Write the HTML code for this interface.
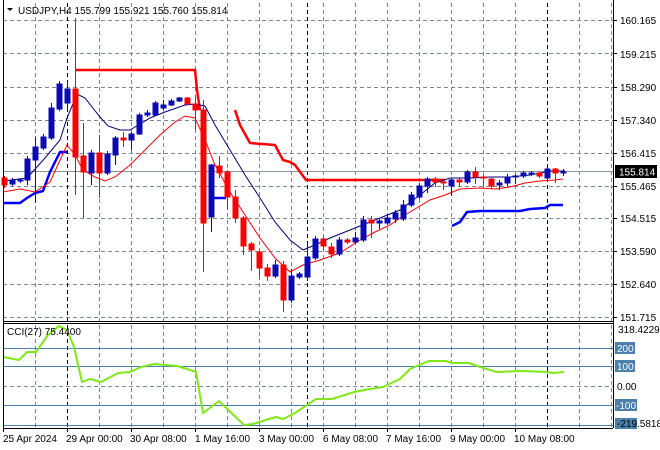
<!DOCTYPE html>
<html><head><meta charset="utf-8"><style>
html,body{margin:0;padding:0;background:#fff;width:660px;height:450px;overflow:hidden}
svg text{font-family:"Liberation Sans",sans-serif;font-size:10px;fill:#000}
</style></head><body>
<svg width="660" height="450" xmlns="http://www.w3.org/2000/svg">
<rect width="660" height="450" fill="#fff"/>
<g stroke="#7b8894" stroke-dasharray="4,3" stroke-width="1">
<line x1="3" y1="20.5" x2="613" y2="20.5"/><line x1="3" y1="53.5" x2="613" y2="53.5"/><line x1="3" y1="87.5" x2="613" y2="87.5"/><line x1="3" y1="120.5" x2="613" y2="120.5"/><line x1="3" y1="153.5" x2="613" y2="153.5"/><line x1="3" y1="186.5" x2="613" y2="186.5"/><line x1="3" y1="218.5" x2="613" y2="218.5"/><line x1="3" y1="251.5" x2="613" y2="251.5"/><line x1="3" y1="284.5" x2="613" y2="284.5"/><line x1="3" y1="317.5" x2="613" y2="317.5"/>
<line x1="35.5" y1="3" x2="35.5" y2="428"/><line x1="99.5" y1="3" x2="99.5" y2="428"/><line x1="131.5" y1="3" x2="131.5" y2="428"/><line x1="163.5" y1="3" x2="163.5" y2="428"/><line x1="195.5" y1="3" x2="195.5" y2="428"/><line x1="227.5" y1="3" x2="227.5" y2="428"/><line x1="259.5" y1="3" x2="259.5" y2="428"/><line x1="291.5" y1="3" x2="291.5" y2="428"/><line x1="323.5" y1="3" x2="323.5" y2="428"/><line x1="355.5" y1="3" x2="355.5" y2="428"/><line x1="387.5" y1="3" x2="387.5" y2="428"/><line x1="419.5" y1="3" x2="419.5" y2="428"/><line x1="451.5" y1="3" x2="451.5" y2="428"/><line x1="483.5" y1="3" x2="483.5" y2="428"/><line x1="515.5" y1="3" x2="515.5" y2="428"/><line x1="579.5" y1="3" x2="579.5" y2="428"/><line x1="611.5" y1="3" x2="611.5" y2="428"/>
<line x1="3" y1="386.5" x2="613" y2="386.5"/>
</g>
<g stroke="#000" stroke-dasharray="4,3"><line x1="67.5" y1="3" x2="67.5" y2="428"/><line x1="307.5" y1="3" x2="307.5" y2="428"/><line x1="547.5" y1="3" x2="547.5" y2="428"/></g>
<line x1="3" y1="171.5" x2="613" y2="171.5" stroke="#8a949c"/>
<g fill="none" stroke-width="2.5" stroke-linejoin="round">
<polyline stroke="#ff0000" points="75,70 195,70 197,90 200,110"/>
<polyline stroke="#ff0000" points="235,110 240,125 250,143 275,145 283,160 290,162 295,165 306,180 445,180"/>
<polyline stroke="#0000ff" points="3,203 20,203 27,198 35,193 43,191 50,172 60,152 67,152"/>
<polyline stroke="#0000ff" points="211,198 226,198"/>
<polyline stroke="#0000ff" points="452,226 460,222 467,212 480,211 520,211 530,209 545,208 550,205 563,205"/>
</g>
<polyline fill="none" stroke="#000080" stroke-width="1" points="3,181 27,178 45,158 60,140 67,118 77,94 85,98 100,117 108,126 120,130 130,130 140,124 150,118 165,112 185,105 195,104 205,106 215,125 230,150 245,175 260,198 275,222 290,240 303,250 315,245 330,238 345,232 360,226 380,218 400,210 420,195 435,183 450,178 470,178 490,177 510,177 530,175 550,171 565,171"/>
<polyline fill="none" stroke="#ff0000" stroke-width="1" points="3,192 20,189 35,192 50,182 67,145 75,155 83,170 95,177 105,181 115,177 130,165 145,150 160,135 175,122 185,116 195,118 205,140 215,165 230,192 245,215 260,238 275,258 290,272 303,265 320,260 340,253 360,240 375,232 390,225 400,218 415,209 430,200 445,195 460,189 480,188 495,189 510,187 525,183 540,181 555,180 563,179"/>
<g stroke="#ff0000" fill="#ff0000">
<line x1="4.5" y1="176" x2="4.5" y2="188"/><rect x="2" y="178" width="5" height="7"/>
<line x1="75.5" y1="18" x2="75.5" y2="195"/><rect x="73" y="89" width="5" height="68"/>
<line x1="83.5" y1="123" x2="83.5" y2="218"/><rect x="81" y="156" width="5" height="16"/>
<line x1="99.5" y1="135" x2="99.5" y2="198"/><rect x="97" y="153" width="5" height="20"/>
<line x1="123.5" y1="132" x2="123.5" y2="147"/><rect x="121" y="138" width="5" height="2"/>
<line x1="187.5" y1="97" x2="187.5" y2="105"/><rect x="185" y="98" width="5" height="6"/>
<line x1="195.5" y1="96" x2="195.5" y2="130"/><rect x="193" y="104" width="5" height="6"/>
<line x1="203.5" y1="100" x2="203.5" y2="272"/><rect x="201" y="110" width="5" height="113"/>
<line x1="219.5" y1="156" x2="219.5" y2="178"/><rect x="217" y="166" width="5" height="7"/>
<line x1="227.5" y1="170" x2="227.5" y2="210"/><rect x="225" y="172" width="5" height="25"/>
<line x1="235.5" y1="190" x2="235.5" y2="223"/><rect x="233" y="197" width="5" height="21"/>
<line x1="243.5" y1="216" x2="243.5" y2="255"/><rect x="241" y="218" width="5" height="28"/>
<line x1="251.5" y1="242" x2="251.5" y2="271"/><rect x="249" y="244" width="5" height="6"/>
<line x1="259.5" y1="250" x2="259.5" y2="277"/><rect x="257" y="252" width="5" height="16"/>
<line x1="267.5" y1="264" x2="267.5" y2="281"/><rect x="265" y="268" width="5" height="8"/>
<line x1="283.5" y1="261" x2="283.5" y2="312"/><rect x="281" y="265" width="5" height="35"/>
<line x1="323.5" y1="237" x2="323.5" y2="250"/><rect x="321" y="239" width="5" height="7"/>
<line x1="331.5" y1="243" x2="331.5" y2="258"/><rect x="329" y="247" width="5" height="7"/>
<line x1="347.5" y1="238" x2="347.5" y2="244"/><rect x="345" y="240" width="5" height="2"/>
<line x1="371.5" y1="216" x2="371.5" y2="238"/><rect x="369" y="220" width="5" height="3"/>
<line x1="435.5" y1="177" x2="435.5" y2="187"/><rect x="433" y="179" width="5" height="3"/>
<line x1="443.5" y1="180" x2="443.5" y2="190"/><rect x="441" y="182" width="5" height="1"/>
<line x1="459.5" y1="178" x2="459.5" y2="187"/><rect x="457" y="180" width="5" height="2"/>
<line x1="475.5" y1="167" x2="475.5" y2="184"/><rect x="473" y="172" width="5" height="5"/>
<line x1="483.5" y1="175" x2="483.5" y2="186"/><rect x="481" y="177" width="5" height="1"/>
<line x1="491.5" y1="178" x2="491.5" y2="189"/><rect x="489" y="179" width="5" height="7"/>
<line x1="539.5" y1="172" x2="539.5" y2="178"/><rect x="537" y="173" width="5" height="3"/>
<line x1="555.5" y1="168" x2="555.5" y2="183"/><rect x="553" y="169" width="5" height="4"/>
</g>
<g stroke="#0a0ab4" fill="#0a0ab4">
<line x1="12.5" y1="178" x2="12.5" y2="186"/><rect x="10" y="180" width="5" height="4"/>
<line x1="20.5" y1="179" x2="20.5" y2="183"/><rect x="18" y="180" width="5" height="1"/>
<line x1="27.5" y1="156" x2="27.5" y2="185"/><rect x="25" y="159" width="5" height="21"/>
<line x1="35.5" y1="137" x2="35.5" y2="203"/><rect x="33" y="147" width="5" height="13"/>
<line x1="43.5" y1="134" x2="43.5" y2="150"/><rect x="41" y="137" width="5" height="11"/>
<line x1="51.5" y1="103" x2="51.5" y2="140"/><rect x="49" y="108" width="5" height="30"/>
<line x1="59.5" y1="81" x2="59.5" y2="111"/><rect x="57" y="84" width="5" height="25"/>
<line x1="67.5" y1="81" x2="67.5" y2="110"/><rect x="65" y="89" width="5" height="14"/>
<line x1="91.5" y1="150" x2="91.5" y2="185"/><rect x="89" y="153" width="5" height="20"/>
<line x1="107.5" y1="151" x2="107.5" y2="175"/><rect x="105" y="154" width="5" height="19"/>
<line x1="115.5" y1="136" x2="115.5" y2="165"/><rect x="113" y="138" width="5" height="17"/>
<line x1="131.5" y1="132" x2="131.5" y2="150"/><rect x="129" y="134" width="5" height="6"/>
<line x1="139.5" y1="113" x2="139.5" y2="135"/><rect x="137" y="115" width="5" height="19"/>
<line x1="147.5" y1="110" x2="147.5" y2="117"/><rect x="145" y="113" width="5" height="2"/>
<line x1="155.5" y1="101" x2="155.5" y2="116"/><rect x="153" y="103" width="5" height="12"/>
<line x1="163.5" y1="100" x2="163.5" y2="110"/><rect x="161" y="105" width="5" height="3"/>
<line x1="171.5" y1="99" x2="171.5" y2="106"/><rect x="169" y="101" width="5" height="4"/>
<line x1="179.5" y1="97" x2="179.5" y2="102"/><rect x="177" y="98" width="5" height="3"/>
<line x1="211.5" y1="164" x2="211.5" y2="232"/><rect x="209" y="165" width="5" height="52"/>
<line x1="275.5" y1="260" x2="275.5" y2="278"/><rect x="273" y="265" width="5" height="11"/>
<line x1="291.5" y1="269" x2="291.5" y2="303"/><rect x="289" y="276" width="5" height="24"/>
<line x1="299.5" y1="272" x2="299.5" y2="279"/><rect x="297" y="274" width="5" height="3"/>
<line x1="307.5" y1="243" x2="307.5" y2="281"/><rect x="305" y="257" width="5" height="20"/>
<line x1="315.5" y1="236" x2="315.5" y2="260"/><rect x="313" y="239" width="5" height="19"/>
<line x1="339.5" y1="237" x2="339.5" y2="256"/><rect x="337" y="240" width="5" height="14"/>
<line x1="355.5" y1="232" x2="355.5" y2="244"/><rect x="353" y="238" width="5" height="4"/>
<line x1="363.5" y1="216" x2="363.5" y2="242"/><rect x="361" y="220" width="5" height="20"/>
<line x1="379.5" y1="219" x2="379.5" y2="229"/><rect x="377" y="221" width="5" height="2"/>
<line x1="387.5" y1="214" x2="387.5" y2="225"/><rect x="385" y="218" width="5" height="5"/>
<line x1="395.5" y1="210" x2="395.5" y2="223"/><rect x="393" y="213" width="5" height="6"/>
<line x1="403.5" y1="200" x2="403.5" y2="221"/><rect x="401" y="205" width="5" height="14"/>
<line x1="411.5" y1="192" x2="411.5" y2="207"/><rect x="409" y="195" width="5" height="10"/>
<line x1="419.5" y1="183" x2="419.5" y2="199"/><rect x="417" y="186" width="5" height="11"/>
<line x1="427.5" y1="177" x2="427.5" y2="193"/><rect x="425" y="179" width="5" height="7"/>
<line x1="451.5" y1="178" x2="451.5" y2="196"/><rect x="449" y="180" width="5" height="6"/>
<line x1="467.5" y1="170" x2="467.5" y2="184"/><rect x="465" y="172" width="5" height="10"/>
<line x1="499.5" y1="180" x2="499.5" y2="190"/><rect x="497" y="183" width="5" height="2"/>
<line x1="507.5" y1="174" x2="507.5" y2="186"/><rect x="505" y="177" width="5" height="6"/>
<line x1="515.5" y1="174" x2="515.5" y2="184"/><rect x="513" y="176" width="5" height="1"/>
<line x1="523.5" y1="171" x2="523.5" y2="178"/><rect x="521" y="173" width="5" height="3"/>
<line x1="531.5" y1="171" x2="531.5" y2="176"/><rect x="529" y="173" width="5" height="1"/>
<line x1="547.5" y1="168" x2="547.5" y2="180"/><rect x="545" y="169" width="5" height="9"/>
<line x1="563.5" y1="169" x2="563.5" y2="176"/><rect x="561" y="172" width="5" height="1"/>
</g>
<g stroke="#4a7fae" stroke-width="1">
<line x1="3" y1="348.5" x2="613" y2="348.5"/><line x1="3" y1="366.5" x2="613" y2="366.5"/><line x1="3" y1="405.5" x2="613" y2="405.5"/><line x1="3" y1="425.5" x2="613" y2="425.5"/>
</g>
<polyline fill="none" stroke="#7fe817" stroke-width="2" stroke-linejoin="round" points="3,357 19,360 27,352 36,352 48,335 59,326 67,330 74,347 82,382 90,379 101,382 118,373 130,372 141,367 154,364 177,366 187,369 196,372 203,413 219,401 244,425 253,424 269,419 276,417 283,419 295,413 316,399 332,399 354,392 370,389 383,387 400,379 410,369 429,361 446,361 452,363 469,363 480,367 497,372 522,371 547,372 553,373 564,372"/>
<g fill="none" stroke="#000" stroke-width="1">
<line x1="3.5" y1="0" x2="3.5" y2="428"/>
<line x1="613.5" y1="0" x2="613.5" y2="428"/>
<line x1="3" y1="321.5" x2="613" y2="321.5"/>
<line x1="3" y1="323.5" x2="613" y2="323.5"/>
<line x1="3" y1="428.5" x2="613" y2="428.5"/>
</g>
<g stroke="#000"><line x1="613" y1="20.5" x2="617" y2="20.5"/><line x1="613" y1="53.5" x2="617" y2="53.5"/><line x1="613" y1="87.5" x2="617" y2="87.5"/><line x1="613" y1="120.5" x2="617" y2="120.5"/><line x1="613" y1="153.5" x2="617" y2="153.5"/><line x1="613" y1="186.5" x2="617" y2="186.5"/><line x1="613" y1="218.5" x2="617" y2="218.5"/><line x1="613" y1="251.5" x2="617" y2="251.5"/><line x1="613" y1="284.5" x2="617" y2="284.5"/><line x1="613" y1="317.5" x2="617" y2="317.5"/></g>
<text x="620" y="24">160.165</text><text x="620" y="58">159.215</text><text x="620" y="91">158.290</text><text x="620" y="124">157.340</text><text x="620" y="157">156.415</text><text x="620" y="190">155.465</text><text x="620" y="222">154.515</text><text x="620" y="255">153.590</text><text x="620" y="288">152.640</text><text x="620" y="321">151.715</text>
<rect x="615" y="165" width="42" height="13" fill="#000"/>
<text x="619" y="175.5" style="fill:#fff">155.814</text>
<text x="618" y="333">318.4229</text>
<rect x="615" y="342" width="20" height="12" fill="#4a7fae"/><text x="617" y="352" style="fill:#fff">200</text>
<rect x="615" y="360" width="20" height="12" fill="#4a7fae"/><text x="617" y="370" style="fill:#fff">100</text>
<text x="617" y="390">0.00</text>
<rect x="615" y="399" width="22" height="12" fill="#4a7fae"/><text x="616" y="409" style="fill:#fff">-100</text>
<rect x="615" y="418" width="22" height="11" fill="#4a7fae"/><text x="617" y="427">-219.5818</text>
<polygon points="7,8 13,8 10,11" fill="#000"/>
<text x="18" y="14">USDJPY,H4  155.799 155.921 155.760 155.814</text>
<text x="7" y="335">CCI(27) 75.4400</text>
<g stroke="#000"><line x1="3.5" y1="428" x2="3.5" y2="432"/><line x1="67.5" y1="428" x2="67.5" y2="432"/><line x1="131.5" y1="428" x2="131.5" y2="432"/><line x1="195.5" y1="428" x2="195.5" y2="432"/><line x1="259.5" y1="428" x2="259.5" y2="432"/><line x1="323.5" y1="428" x2="323.5" y2="432"/><line x1="387.5" y1="428" x2="387.5" y2="432"/><line x1="451.5" y1="428" x2="451.5" y2="432"/><line x1="515.5" y1="428" x2="515.5" y2="432"/></g>
<text x="3" y="442">25 Apr 2024</text><text x="66" y="442">29 Apr 00:00</text><text x="130" y="442">30 Apr 08:00</text><text x="195" y="442">1 May 16:00</text><text x="259" y="442">3 May 00:00</text><text x="323" y="442">6 May 08:00</text><text x="386" y="442">7 May 16:00</text><text x="450" y="442">9 May 00:00</text><text x="514" y="442">10 May 08:00</text>
</svg>
</body></html>
